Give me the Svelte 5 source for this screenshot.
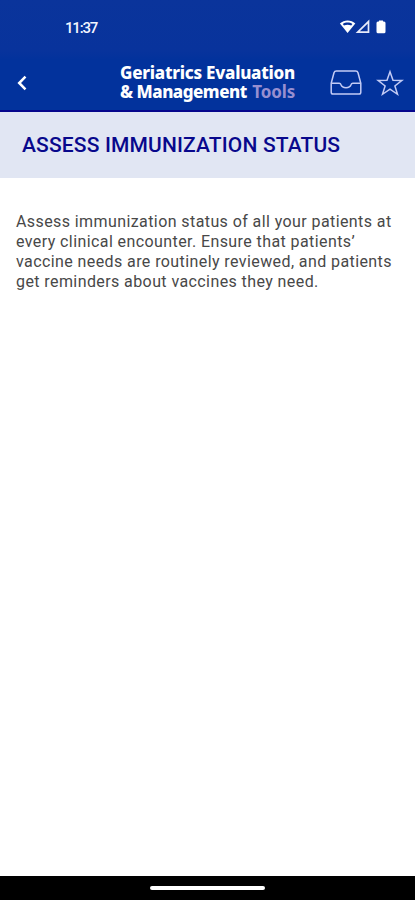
<script>
  const lines = [
    'Assess immunization status of all your patients at',
    'every clinical encounter. Ensure that patients’',
    'vaccine needs are routinely reviewed, and patients',
    'get reminders about vaccines they need.'
  ];
</script>

<div class="screen">
  <header>
    <div class="status">
      <span class="time">11:37</span>
      <svg class="signals" width="50" height="18" viewBox="0 0 50 18" aria-hidden="true">
        <path d="M0.9 5.6C5.2 1.6 12.1 1.6 16.3 5.6L8.6 15Z" fill="#fff" />
        <path d="M3.8 5.9C6.5 4.1 10.7 4.1 13.4 5.9L12.2 7.4C9.8 6.4 7.4 6.4 5 7.4Z" fill="#08329c" />
        <path d="M29.5 3.6V14.2H18.7Z" fill="none" stroke="#e8ebfa" stroke-width="1.7" />
        <path d="M40 2.4H44V3.6H45Q46.5 3.6 46.5 5.1V13.8Q46.5 15.3 45 15.3H39Q37.5 15.3 37.5 13.8V5.1Q37.5 3.6 39 3.6H40Z" fill="#fff" />
      </svg>
    </div>
    <div class="bar">
      <button class="back" aria-label="Back">
        <svg width="12" height="18" viewBox="0 0 12 18"><path d="M9.5 2.7L3.2 9L9.5 15.3" fill="none" stroke="#fff" stroke-width="2.5" /></svg>
      </button>
      <h1>
        <span class="first">Geriatrics Evaluation</span>
        <span class="second">&amp; Management <em>Tools</em></span>
      </h1>
      <div class="actions">
        <button aria-label="Inbox">
          <svg width="34" height="28" viewBox="0 0 34 28" fill="none" stroke="#c3cbf5" stroke-width="1.5" stroke-linejoin="round">
            <path d="M2.2 14.2L5 3.8Q5.5 2 7.4 2H26.6Q28.5 2 29 3.8L31.8 14.2V23.2Q31.8 25 30 25H4Q2.2 25 2.2 23.2Z" />
            <path d="M2.2 14.2H10.2Q11.5 14.2 11.9 15.5Q13 18.8 17 18.8Q21 18.8 22.1 15.5Q22.5 14.2 23.8 14.2H31.8" />
          </svg>
        </button>
        <button aria-label="Favorite">
          <svg width="28" height="28" viewBox="0 0 28 28" fill="none" stroke="#c3cbf5" stroke-width="1.5" stroke-linejoin="miter">
            <path d="M14 2.7L17 11.2L26 11.4L18.9 16.9L21.5 25.3L14 20.2L6.5 25.3L9.1 16.9L2 11.4L11 11.2Z" />
          </svg>
        </button>
      </div>
    </div>
  </header>
  <h2><span>ASSESS IMMUNIZATION STATUS</span></h2>
  <main>
    <p>{#each lines as line}<span class="line">{line}</span>{/each}</p>
  </main>
  <footer><i></i></footer>
</div>

<style>
  .screen {
    width: 415px;
    height: 900px;
    display: flex;
    flex-direction: column;
    overflow: hidden;
    background: #fff;
    font-family: Roboto, sans-serif;
  }
  header {
    flex: none;
    box-sizing: border-box;
    height: 112px;
    background: linear-gradient(#0a349b 0, #08339c 50px, #02329c 60px);
    border-bottom: 2px solid #06068c;
  }
  .status {
    height: 55px;
    box-sizing: border-box;
    padding: 18px 26px 0 65px;
    display: flex;
    justify-content: space-between;
    color: #f4f6ff;
  }
  .time {
    font-size: 15px;
    line-height: 20px;
    font-weight: 500;
    letter-spacing: -1.2px;
  }
  .bar {
    height: 55px;
    display: flex;
    align-items: center;
  }
  button {
    border: 0;
    padding: 0;
    background: none;
    display: flex;
  }
  .back {
    width: 104px;
    padding-left: 16px;
    box-sizing: content-box;
  }
  h1 {
    margin: 0 0 2px;
    width: 210px;
    display: flex;
    flex-direction: column;
    font: 800 17px/19px "Noto Sans", sans-serif;
    color: #fff;
    white-space: nowrap;
  }
  .first { letter-spacing: -0.25px; }
  .second { letter-spacing: -0.5px; }
  em {
    font-style: normal;
    font-weight: 700;
    letter-spacing: -0.1px;
    margin-left: 1.5px;
    color: #978fd0;
  }
  .actions {
    display: flex;
    gap: 13px;
    margin-left: -1px;
  }
  h2 {
    flex: none;
    margin: 0;
    height: 66px;
    box-sizing: border-box;
    padding: 0 0 1px 22px;
    display: flex;
    align-items: center;
    background: #e1e6f3;
    color: #08088c;
    font-size: 21px;
    font-weight: 500;
    letter-spacing: 0.15px;
    white-space: nowrap;
  }
  main {
    flex: 1;
    padding: 34px 16px 0;
  }
  p {
    margin: 0;
    font-size: 16px;
    line-height: 20px;
    color: #484848;
  }
  .line {
    display: block;
    white-space: nowrap;
    letter-spacing: 0.41px;
  }
  footer {
    height: 24px;
    flex: none;
    background: #000;
    display: flex;
    justify-content: center;
    align-items: center;
  }
  footer i {
    width: 115px;
    height: 4px;
    border-radius: 2px;
    background: #fff;
    margin-bottom: 1px;
  }
</style>
